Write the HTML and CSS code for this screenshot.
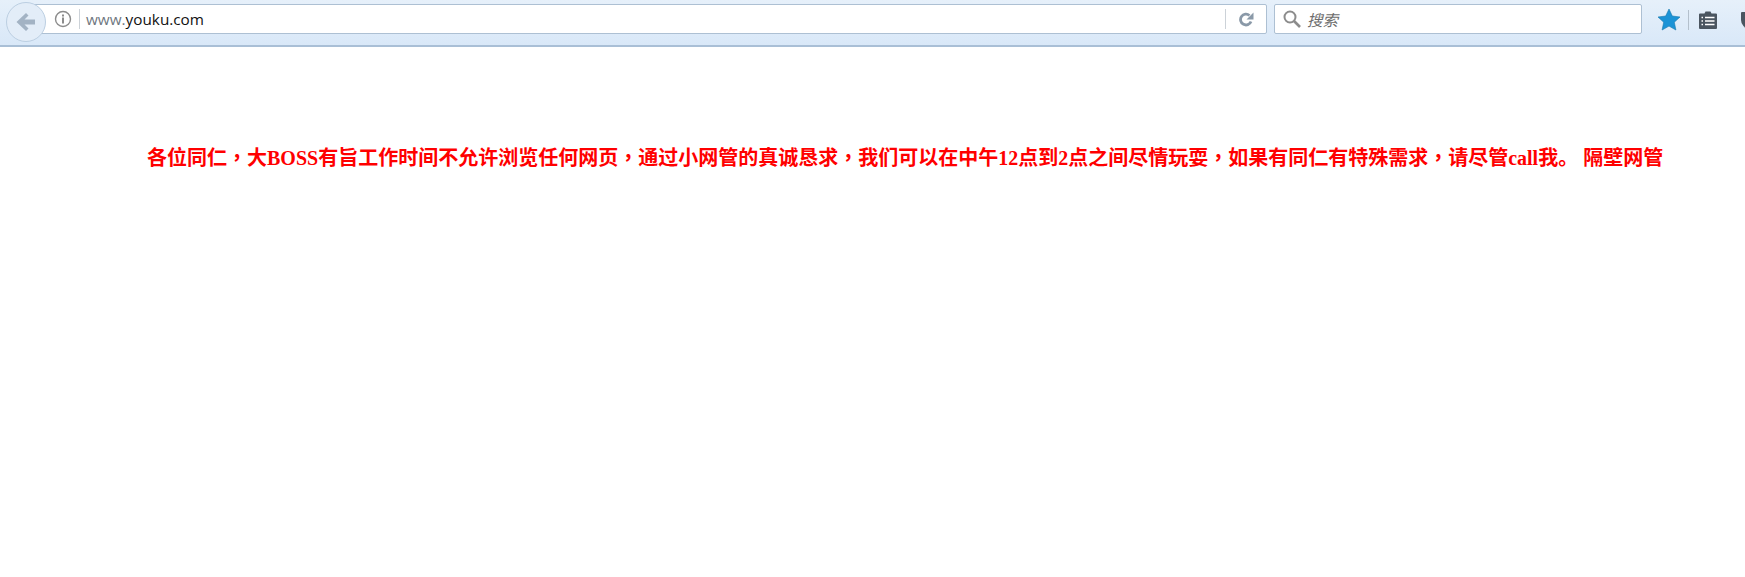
FILE: index.html
```html
<!DOCTYPE html>
<html lang="zh-CN">
<head>
    <meta charset="UTF-8">
    <title>www.youku.com</title>
    <link rel="stylesheet" href="styles.css">
</head>
<body>
    <div class="toolbar">
        <div class="back-btn">
            <svg width="22" height="20" viewBox="0 0 22 20">
                <path d="M11 1 L1.5 10 L11 19 L13.5 16.5 L9.5 12.5 H20 V7.5 H9.5 L13.5 3.5 Z" fill="#a3b3c4"/>
            </svg>
        </div>
        <div class="url-bar">
            <svg class="info-icon" width="18" height="18" viewBox="0 0 18 18">
                <circle cx="9" cy="9" r="7.5" fill="none" stroke="#8c8c8c" stroke-width="1.4"/>
                <rect x="8" y="7.5" width="2" height="6" fill="#8c8c8c"/>
                <rect x="8" y="4.5" width="2" height="2" fill="#8c8c8c"/>
            </svg>
            <span class="divider"></span>
            <div class="url-text"><span class="url-sub">www.</span>youku.com</div>
            <span class="divider"></span>
            <svg class="reload-icon" width="16" height="16" viewBox="0 0 16 16">
                <path d="M13 10.5 A5.4 5.4 0 1 1 11.5 4.5" fill="none" stroke="#8a99a8" stroke-width="2.8"/>
                <path d="M15.5 1.5 V8.5 H8.5 Z" fill="#8a99a8"/>
            </svg>
        </div>
        <div class="search-bar">
            <svg width="20" height="20" viewBox="0 0 20 20">
                <circle cx="8" cy="8" r="5.5" fill="none" stroke="#8c8c8c" stroke-width="2"/>
                <path d="M12 12 L18 18" stroke="#8c8c8c" stroke-width="2.6"/>
            </svg>
            <span class="search-text">搜索</span>
        </div>
        <div class="tools">
            <svg class="star-icon" width="24" height="23" viewBox="0 0 24 23">
                <path d="M12 1 L15.3 8 L23 9 L17.3 14.2 L18.9 22 L12 18.1 L5.1 22 L6.7 14.2 L1 9 L8.7 8 Z" fill="#1b93d6" stroke="#1878ad" stroke-width="0.6"/>
            </svg>
            <span class="tool-sep"></span>
            <svg class="list-icon" width="20" height="20" viewBox="0 0 20 20">
                <path d="M2 3.5 H6.5 L7.5 1.5 H12.5 L13.5 3.5 H18 Q19 3.5 19 4.5 V18 Q19 19 18 19 H2 Q1 19 1 18 V4.5 Q1 3.5 2 3.5 Z" fill="#4a5560"/>
                <path d="M3.5 7.5 H5 M7 7.5 H16.5 M3.5 11 H5 M7 11 H16.5 M3.5 14.5 H5 M7 14.5 H16.5" stroke="#fff" stroke-width="1.6"/>
            </svg>
            <svg class="pocket-icon" width="20" height="20" viewBox="0 0 20 20">
                <path d="M2 2 H18 Q19 2 19 3 V10 A9 9 0 0 1 1 10 V3 Q1 2 2 2 Z" fill="#4a5560"/>
            </svg>
        </div>
    </div>
    <div class="content">
        <p class="notice">各位同仁<span class="comma" lang="zh-TW">，</span>大BOSS有旨工作时间不允许浏览任何网页<span class="comma" lang="zh-TW">，</span>通过小网管的真诚恳求<span class="comma" lang="zh-TW">，</span>我们可以在中午12点到2点之间尽情玩耍<span class="comma" lang="zh-TW">，</span>如果有同仁有特殊需求<span class="comma" lang="zh-TW">，</span>请尽管call我。 隔壁网管</p>
    </div>
</body>
</html>
```

FILE: styles.css
```css
html, body {
    height: 100%;
}

body {
    margin: 0;
    background-color: white;
    overflow: hidden;
}

.toolbar {
    display: flex;
    align-items: center;
    height: 44px;
    padding-bottom: 1px;
    background: linear-gradient(to bottom, #e6f0fa 0%, #d9e8f8 100%);
    border-bottom: 2px solid #a9bfd6;
    box-sizing: content-box;
    overflow: hidden;
}

.back-btn {
    display: flex;
    justify-content: center;
    align-items: center;
    flex: none;
    width: 38px;
    height: 38px;
    margin-left: 6px;
    margin-right: -12px;
    border: 1px solid #bccfe2;
    border-radius: 50%;
    background-color: #e3edf8;
    position: relative;
    z-index: 1;
}

.url-bar {
    display: flex;
    align-items: center;
    width: 1233px;
    height: 30px;
    flex: none;
    padding-left: 19px;
    padding-right: 10px;
    margin-bottom: 7px;
    box-sizing: border-box;
    background-color: white;
    border: 1px solid #adc0d3;
    border-radius: 0 2px 2px 0;
}

.info-icon {
    flex: none;
}

.divider {
    flex: none;
    width: 1px;
    height: 20px;
    margin-left: 7px;
    background-color: #ccd2d8;
}

.url-text {
    flex: 1;
    padding-left: 6px;
    font-family: "Open Sans", sans-serif;
    font-size: 15.3px;
    color: #111;
}

.url-sub {
    color: #6f7780;
}

.reload-icon {
    flex: none;
    margin-left: 12px;
    margin-right: 2px;
}

.search-bar {
    display: flex;
    align-items: center;
    gap: 5px;
    flex: none;
    width: 368px;
    height: 30px;
    margin-left: 7px;
    margin-bottom: 7px;
    padding-left: 7px;
    box-sizing: border-box;
    background-color: white;
    border: 1px solid #adc0d3;
    border-radius: 2px;
}

.search-text {
    font-family: "Noto Sans CJK SC", sans-serif;
    font-size: 15.5px;
    font-style: italic;
    color: #6d6d6d;
}

.tools {
    display: flex;
    align-items: center;
    flex: none;
    margin-left: 15px;
    margin-bottom: 5px;
}

.tool-sep {
    flex: none;
    width: 1px;
    height: 20px;
    margin-left: 7px;
    margin-right: 9px;
    background-color: #b4c0cc;
}

.list-icon {
    flex: none;
}

.pocket-icon {
    flex: none;
    margin-left: 22px;
}

.content {
    padding-top: 98px;
    padding-left: 147px;
}

.notice {
    margin: 0;
    font-family: "Liberation Serif", "Noto Sans CJK SC", serif;
    font-size: 20px;
    font-weight: bold;
    line-height: 24px;
    color: #ff0000;
    white-space: nowrap;
}

/* the original comma sits in the middle of its cell */
.comma {
    font-family: "Noto Sans CJK TC", serif;
}
```
